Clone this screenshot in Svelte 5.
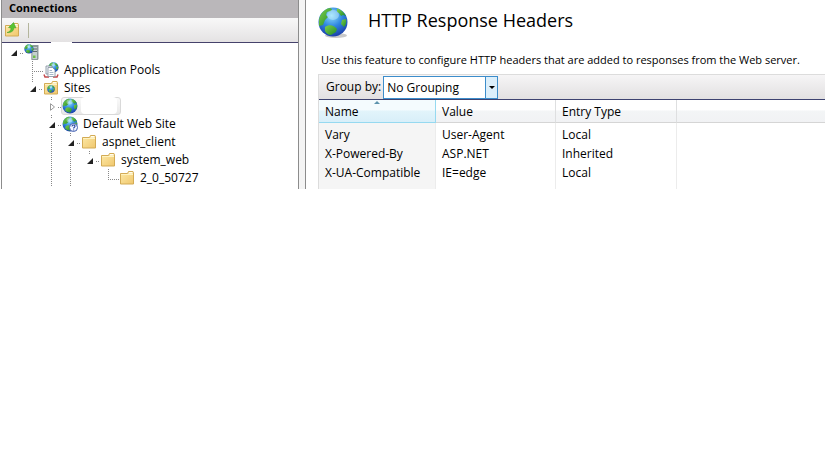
<script lang="ts">
    type Guide = 'blank' | 'line' | 'tee' | 'elbow' | 'root' | 'open' | 'closed';
    type Icon = 'server' | 'pools' | 'sites' | 'globe' | 'help' | 'folder';
    type Node = { label: string; icon: Icon; guides: Guide[]; selected?: boolean };

    const nodes: Node[] = [
        { label: '', icon: 'server', guides: ['root'] },
        { label: 'Application Pools', icon: 'pools', guides: ['blank', 'tee'] },
        { label: 'Sites', icon: 'sites', guides: ['blank', 'open'] },
        { label: '', icon: 'globe', guides: ['blank', 'blank', 'closed'], selected: true },
        { label: 'Default Web Site', icon: 'help', guides: ['blank', 'blank', 'open'] },
        { label: 'aspnet_client', icon: 'folder', guides: ['blank', 'blank', 'line', 'open'] },
        { label: 'system_web', icon: 'folder', guides: ['blank', 'blank', 'line', 'line', 'open'] },
        { label: '2_0_50727', icon: 'folder', guides: ['blank', 'blank', 'line', 'line', 'blank', 'elbow'] }
    ];

    const headers = [
        { name: 'Vary', value: 'User-Agent', type: 'Local' },
        { name: 'X-Powered-By', value: 'ASP.NET', type: 'Inherited' },
        { name: 'X-UA-Compatible', value: 'IE=edge', type: 'Local' }
    ];

    let grouping = $state('No Grouping');
</script>

{#snippet globe()}
    <circle cx="8" cy="8" r="7.5" fill="url(#sea)" />
    <path d="M1 6C2 3 4 1 7 .7L8 2 6 4 6.500 6 4 8 2.500 7.500 1 9Z" fill="url(#land)" />
    <path d="M9.500 1C12 1.500 14 3 15 5.500L13.500 5 12 6 11 4.500 9.500 4Z" fill="url(#land)" />
    <path d="M12 7l3-.5c.5 2-.3 4-1.500 5L12 10Z" fill="url(#land)" />
    <path d="M4 10c2-1.500 5-.5 6 1.500L8.500 14.500C6 15 4 13.500 3 12Z" fill="url(#land)" />
    <ellipse cx="7.500" cy="4" rx="3" ry="2.500" fill="#d9f5ff" opacity=".45" />
{/snippet}

{#snippet folder()}
    <path d="M1.500 3.500h7l1-2h4.500l.5 1v11.500h-13Z" fill="url(#paper)" stroke="#d3ab55" />
    <path d="M9.500 3.500l.5-1.500h3.500v1.500Z" fill="#fffdf0" />
    <path d="M2 4.500h12" stroke="#fff3c0" />
{/snippet}

{#snippet icon(name: Icon)}
    <svg class="icon" viewBox="0 0 16 16" aria-hidden="true">
        {#if name === 'server'}
            <path d="M7.500 2l1-1h6v14l-1 1h-6Z" fill="#8d9a9c" />
            <path d="M8 2.500h5.500v13H8Z" fill="#c5d0d0" stroke="#7b8789" stroke-width=".6" />
            <path d="M9 5h4M9 7.500h4" stroke="#5f6b6d" />
            <path d="M9 11.500h2.500v2.500H9Z" fill="#6cc04a" />
            <g transform="scale(.62)">{@render globe()}</g>
        {:else if name === 'pools'}
            <g transform="translate(5 0) scale(.68)">{@render globe()}</g>
            <path d="M1 12.500l1 2.500h4M10 15h4l1-2.500" fill="none" stroke="#c4494d" stroke-width="1.500" />
            <path d="M3 4h6v8H3Z" fill="#eef3f8" stroke="#7f8c9b" stroke-width=".8" />
            <path d="M5 5.500h4.500l2.500 2.500v6.500H5Z" fill="#fff" stroke="#7f8c9b" stroke-width=".8" />
            <path d="M6.500 8.500h2.500M6.500 10.500h4M6.500 12.500h4" stroke="#93a6bb" stroke-width=".8" />
        {:else if name === 'sites'}
            {@render folder()}
            <g transform="translate(4 5) scale(.5)">{@render globe()}</g>
        {:else if name === 'globe'}
            {@render globe()}
        {:else if name === 'help'}
            {@render globe()}
            <circle cx="11.500" cy="11.500" r="4" fill="#f3f7ff" stroke="#4260b0" />
            <path d="M10 10.500c0-2 3-2 3-.2 0 1-1.400 1-1.400 2.200M11.600 13.400v1" fill="none" stroke="#2744a3" stroke-width="1.100" />
        {:else}
            {@render folder()}
        {/if}
    </svg>
{/snippet}

<svg class="defs" aria-hidden="true">
    <defs>
        <radialGradient id="sea" cx=".45" cy=".28" r=".75">
            <stop offset="0" stop-color="#8fe0fb" />
            <stop offset=".5" stop-color="#2f86e0" />
            <stop offset="1" stop-color="#1a3aa6" />
        </radialGradient>
        <linearGradient id="land" x1="0" y1="0" x2="1" y2="1">
            <stop offset="0" stop-color="#7fd04a" />
            <stop offset="1" stop-color="#1f8a2a" />
        </linearGradient>
        <linearGradient id="paper" x1="0" y1="0" x2="1" y2="1">
            <stop offset="0" stop-color="#fdeaa8" />
            <stop offset="1" stop-color="#f0c76d" />
        </linearGradient>
    </defs>
</svg>

<div class="manager">
    <aside class="connections">
        <h2>Connections</h2>
        <div class="toolbar">
            <button class="up" aria-label="Up">
                <svg class="icon" viewBox="0 0 16 16" aria-hidden="true">
                    {@render folder()}
                    <path d="M3 10.500C6 10 7 8 7 6L4.500 5.500 9.500.5 12 6 10 5.500C10 9 7 11 3 10.500Z" fill="#58c332" stroke="#3b9a27" stroke-width=".5" />
                </svg>
            </button>
            <span class="separator"></span>
        </div>
        <ul class="tree">
            {#each nodes as node}
                <li>
                    {#each node.guides as guide}
                        <span class="guide {guide}">
                            {#if guide === 'open' || guide === 'root'}
                                <svg viewBox="0 0 6 8" aria-hidden="true"><path d="M6 1v6H0Z" fill="#222" /></svg>
                            {:else if guide === 'closed'}
                                <svg viewBox="0 0 6 8" aria-hidden="true"><path d="M1.500.7v6.600L5.500 4Z" fill="#fff" stroke="#9a9a9a" /></svg>
                            {/if}
                        </span>
                    {/each}
                    <span class="entry" class:selected={node.selected}>
                        {@render icon(node.icon)}
                        {#if node.label}
                            <span class="label">{node.label}</span>
                        {:else}
                            <span class="cleared"></span>
                        {/if}
                    </span>
                </li>
            {/each}
        </ul>
    </aside>

    <main>
        <header>
            <svg class="logo" viewBox="0 0 32 32" aria-hidden="true">
                <ellipse cx="18" cy="28.500" rx="11" ry="2.500" fill="#c9c9c9" />
                <circle cx="15" cy="15" r="14.500" fill="url(#sea)" />
                <path d="M1 13C2 7 6 2 12 1l2 1-1 2-4 1-1 3 2 2-3 3-2 5-4 1Z" fill="url(#land)" />
                <path d="M19 1.500c4 1 7 4 9 7.500l-3-1-2 1-2-3-2-1Z" fill="url(#land)" />
                <path d="M24 13l4-1c.8 4-.2 6-2 8l-3-3Z" fill="url(#land)" />
                <path d="M7 20c4-3 9-2 12 2l-1 3-5 3c-3 0-5-2-6-4Z" fill="url(#land)" />
                <ellipse cx="15" cy="8" rx="6" ry="5" fill="#d9f5ff" opacity=".4" />
            </svg>
            <h1>HTTP Response Headers</h1>
        </header>
        <p>Use this feature to configure HTTP headers that are added to responses from the Web server.</p>

        <section class="list">
            <div class="grouping">
                <label for="grouping">Group by:</label>
                <div class="select">
                    <select id="grouping" bind:value={grouping}>
                        <option>No Grouping</option>
                        <option>Entry Type</option>
                    </select>
                    <span class="drop"></span>
                </div>
            </div>
            <table>
                <colgroup>
                    <col class="name" />
                    <col class="value" />
                    <col class="type" />
                    <col />
                </colgroup>
                <thead>
                    <tr>
                        <th class="sorted" aria-sort="ascending">Name</th>
                        <th>Value</th>
                        <th>Entry Type</th>
                        <td></td>
                    </tr>
                </thead>
                <tbody>
                    {#each headers as header}
                        <tr>
                            <td>{header.name}</td>
                            <td>{header.value}</td>
                            <td>{header.type}</td>
                            <td></td>
                        </tr>
                    {/each}
                </tbody>
            </table>
        </section>
    </main>
</div>

<style>
    :global(body) {
        margin: 0;
        background: #fff;
    }

    .defs {
        position: absolute;
        width: 0;
        height: 0;
    }

    .manager {
        display: grid;
        grid-template-columns: 298px minmax(0, 1fr);
        column-gap: 6px;
        margin-left: 1px;
        background: #f4f4f4;
        color: #000;
        font-family: "Open Sans", "Noto Sans", sans-serif;
        font-size: 12px;
        line-height: 18px;
    }

    .connections {
        box-sizing: border-box;
        padding-bottom: 2px;
        border: solid #8c8c8c;
        border-width: 0 1px;
        background: #fff;
    }

    h2 {
        margin: 0;
        padding: 0 7px;
        height: 18px;
        background: #bab7ba;
        font-size: 11px;
        line-height: 15px;
    }

    .toolbar {
        display: flex;
        align-items: center;
        gap: 8px;
        height: 24px;
        padding-left: 2px;
        border-bottom: 1px solid #45426b;
        background: linear-gradient(#f8f8f8, #e4e2e3);
    }

    .up {
        padding: 0;
        border: 0;
        background: none;
        line-height: 0;
    }

    .separator {
        width: 1px;
        height: 15px;
        background: #b4b59c;
    }

    .icon {
        flex: none;
        width: 16px;
        height: 16px;
    }

    .tree {
        margin: 0;
        padding: 0 0 0 3px;
        list-style: none;
    }

    li {
        display: flex;
        height: 18px;
    }

    .guide {
        box-sizing: border-box;
        display: flex;
        flex: none;
        align-items: center;
        justify-content: center;
        width: 19px;
        padding: 2px 1px 0 0;
        background-repeat: no-repeat;
    }

    .guide svg {
        width: 6px;
        height: 8px;
    }

    .line {
        background-image: repeating-linear-gradient(#888 0 1px, transparent 1px 2px);
        background-position: 8px 0;
        background-size: 1px 100%;
    }

    .tee,
    .elbow {
        background-image:
            repeating-linear-gradient(#888 0 1px, transparent 1px 2px),
            repeating-linear-gradient(90deg, #888 0 1px, transparent 1px 2px);
        background-position: 8px 0, 8px 10px;
        background-size: 1px 100%, 11px 1px;
    }

    .elbow {
        background-size: 1px 10px, 11px 1px;
    }

    .root,
    .open,
    .closed {
        background-image:
            repeating-linear-gradient(90deg, #888 0 1px, transparent 1px 2px),
            repeating-linear-gradient(#888 0 1px, transparent 1px 2px);
        background-position: 15px 10px, 8px 0;
        background-size: 3px 1px, 1px 4px;
    }

    .root {
        background-size: 3px 1px, 0 0;
    }

    .entry {
        position: relative;
        display: flex;
        align-items: center;
        gap: 5px;
    }

    .selected {
        box-sizing: border-box;
        width: 60px;
        margin-left: -1px;
        border: 1px solid #d9d9d9;
        border-radius: 3px;
        background: linear-gradient(#fafafa, #e8e8e8);
    }

    .cleared {
        position: absolute;
        top: -1px;
        left: 27px;
        width: 21px;
        height: 18px;
        background: #fff;
    }

    .selected .cleared {
        left: 19px;
        width: 36px;
        height: 17px;
        border-radius: 4px;
    }

    .label {
        white-space: nowrap;
    }

    main {
        display: flex;
        flex-direction: column;
        min-width: 0;
        padding-left: 12px;
        border-left: 1px solid #8c8c8c;
        background: #fff;
    }

    header {
        display: flex;
        align-items: center;
        gap: 18px;
        padding-top: 7px;
    }

    .logo {
        width: 32px;
        height: 32px;
    }

    h1 {
        margin: 0;
        padding-bottom: 6px;
        font-size: 18px;
        font-weight: 400;
        line-height: 26px;
    }

    p {
        margin: 12px 0 5px 3px;
        font-size: 11px;
    }

    .list {
        display: flex;
        flex: 1;
        flex-direction: column;
        border-left: 1px solid #dcdcdc;
    }

    .grouping {
        display: flex;
        align-items: center;
        gap: 2px;
        height: 24px;
        padding-left: 7px;
        border-top: 1px solid #dcdcdc;
        border-bottom: 1px solid #3d4270;
        background: linear-gradient(#f6f5f6, #e2e0e1);
    }

    .select {
        position: relative;
        display: flex;
        width: 115px;
    }

    select {
        width: 100%;
        height: 23px;
        padding: 2px 16px 0 3px;
        border: 1px solid #3c8dcb;
        border-radius: 0;
        appearance: none;
        background: #fff;
        color: #000;
        font: inherit;
    }

    .drop {
        position: absolute;
        top: 1px;
        right: 1px;
        bottom: 1px;
        display: grid;
        place-items: center;
        width: 11px;
        border-left: 1px solid #3c8dcb;
        background: #dceffb;
        pointer-events: none;
    }

    .drop::after {
        content: '';
        border: 3px solid transparent;
        border-top-color: #000;
        border-bottom: 0;
    }

    table {
        flex: 1;
        width: 100%;
        border-collapse: separate;
        border-spacing: 0;
        table-layout: fixed;
    }

    .name {
        width: 117px;
    }

    .value {
        width: 120px;
    }

    .type {
        width: 121px;
    }

    th,
    td {
        height: 19px;
        padding: 0 6px;
        border-right: 1px solid #ececec;
        box-sizing: border-box;
        font-weight: 400;
        line-height: 18px;
        text-align: left;
        white-space: nowrap;
    }

    th:last-child,
    td:last-child {
        border-right: 0;
    }

    thead th,
    thead td {
        height: 23px;
        padding-top: 2px;
        border-right-color: #dedfe0;
        border-bottom: 1px solid #d5d5d5;
        background: linear-gradient(#fff 45%, #f3f5f6 50%, #f1f2f4);
    }

    thead .sorted {
        position: relative;
        border-color: #96d9f0;
        background: linear-gradient(#f4fbfe 45%, #e2f4fb 50%, #d8eff9);
    }

    .sorted::before {
        content: '';
        position: absolute;
        top: 1px;
        left: 55px;
        border: 3px solid transparent;
        border-top: 0;
        border-bottom-color: #5c93ad;
    }

    tbody td:first-child {
        background: #f5f5f5;
    }

    tbody tr:first-child td {
        height: 21px;
        padding-top: 2px;
    }

    tbody tr:last-child td {
        height: 25px;
        padding-bottom: 6px;
    }
</style>
